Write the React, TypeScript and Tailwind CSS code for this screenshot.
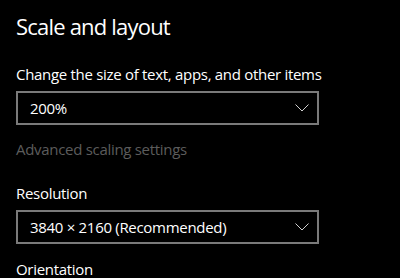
export default function App() {
  return (
    <div className="h-[278px] w-[400px] overflow-hidden bg-black pl-4 text-white" style={{ fontFamily: '"Open Sans", "Noto Sans", sans-serif' }}>
      <h1 className="pt-[11px] text-[22px] leading-[30px] tracking-[-0.8px]">Scale and layout</h1>

      <div className="mt-[23px] text-[15px] leading-[20px] tracking-[-0.3px]">Change the size of text, apps, and other items</div>
      <Dropdown value="200%" className="mt-[7px]" />

      <div className="mt-[14px] text-[15px] leading-[20px] tracking-[-0.3px] text-[#5c5c5c]">Advanced scaling settings</div>

      <div className="mt-[24px] text-[15px] leading-[20px] tracking-[-0.3px]">Resolution</div>
      <Dropdown value="3840 × 2160 (Recommended)" className="mt-[7px]" />

      <div className="mt-[15px] text-[15px] leading-[20px] tracking-[-0.3px]">Orientation</div>
    </div>
  );
}

function Dropdown({ value, className }: { value: string; className?: string }) {
  return (
    <div className={`flex h-[34px] w-[303px] items-center justify-between border-2 border-[#7a7a7a] pl-3 pr-[8px] ${className}`}>
      <span className="text-[15px] leading-[20px] tracking-[-0.3px]">{value}</span>
      <svg width="14" height="8" viewBox="0 0 14 8" fill="none" stroke="#d0d0d0" strokeWidth="1">
        <path d="M0.5 0.5 L7 7 L13.5 0.5" />
      </svg>
    </div>
  );
}
